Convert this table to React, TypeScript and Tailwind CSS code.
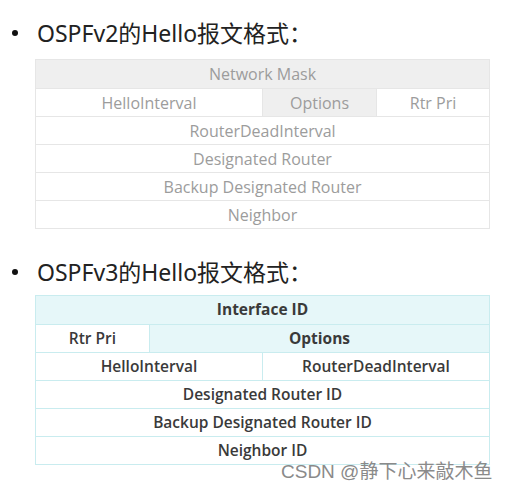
import React from "react";

const cjk = { fontFamily: '"Noto Sans", "Noto Sans CJK SC", sans-serif' };
const cell = { fontFamily: '"Open Sans", "Noto Sans", sans-serif' };

function Heading({ text }: { text: string }) {
  return (
    <div className="flex items-center h-[26px]">
      <div className="w-[37px] flex justify-center pl-[2px] pr-[10px]">
        <span className="block w-[6px] h-[6px] rounded-full bg-[#111]" />
      </div>
      <span className="text-[23px] leading-[26px] text-[#222]" style={cjk}>
        {text}
      </span>
    </div>
  );
}

export default function App() {
  return (
    <div className="relative w-[508px] h-[490px] bg-white overflow-hidden">
      <div className="pt-[20px]">
        <Heading text="OSPFv2的Hello报文格式：" />
      </div>

      {/* OSPFv2 table */}
      <div
        className="ml-[35px] mt-[13px] w-[455px] border border-[#e6e6e6] text-[16px] text-[#9c9c9c]"
        style={cell}
      >
        <div className="h-[28px] flex items-center justify-center bg-[#efefef]">Network Mask</div>
        <div className="h-[28px] flex border-t border-[#e6e6e6]">
          <div className="w-[226px] flex items-center justify-center">HelloInterval</div>
          <div className="w-[114px] flex items-center justify-center bg-[#efefef] border-l border-[#e6e6e6]">Options</div>
          <div className="flex-1 flex items-center justify-center border-l border-[#e6e6e6]">Rtr Pri</div>
        </div>
        <div className="h-[28px] flex items-center justify-center border-t border-[#e6e6e6]">RouterDeadInterval</div>
        <div className="h-[28px] flex items-center justify-center border-t border-[#e6e6e6]">Designated Router</div>
        <div className="h-[28px] flex items-center justify-center border-t border-[#e6e6e6]">Backup Designated Router</div>
        <div className="h-[28px] flex items-center justify-center border-t border-[#e6e6e6]">Neighbor</div>
      </div>

      <div className="mt-[30px]">
        <Heading text="OSPFv3的Hello报文格式：" />
      </div>

      {/* OSPFv3 table */}
      <div
        className="ml-[35px] mt-[10px] w-[455px] border border-[#c9ecef] text-[15.5px] text-[#3a3a3a] font-[550]"
        style={cell}
      >
        <div className="h-[28px] flex items-center justify-center bg-[#e6f7f9] font-bold">Interface ID</div>
        <div className="h-[28px] flex border-t border-[#c9ecef]">
          <div className="w-[113px] flex items-center justify-center">Rtr Pri</div>
          <div className="flex-1 flex items-center justify-center bg-[#e6f7f9] border-l border-[#c9ecef] font-bold">Options</div>
        </div>
        <div className="h-[28px] flex border-t border-[#c9ecef]">
          <div className="w-[226px] flex items-center justify-center">HelloInterval</div>
          <div className="flex-1 flex items-center justify-center border-l border-[#c9ecef]">RouterDeadInterval</div>
        </div>
        <div className="h-[28px] flex items-center justify-center border-t border-[#c9ecef]">Designated Router ID</div>
        <div className="h-[28px] flex items-center justify-center border-t border-[#c9ecef]">Backup Designated Router ID</div>
        <div className="h-[28px] flex items-center justify-center border-t border-[#c9ecef]">Neighbor ID</div>
      </div>

      <div
        className="absolute left-[281px] top-[459px] text-[19px] leading-[26px] text-[#8a8a8a] whitespace-nowrap"
        style={{ fontFamily: '"Liberation Sans", "Noto Sans CJK SC", sans-serif' }}
      >
        CSDN @静下心来敲木鱼
      </div>
    </div>
  );
}
